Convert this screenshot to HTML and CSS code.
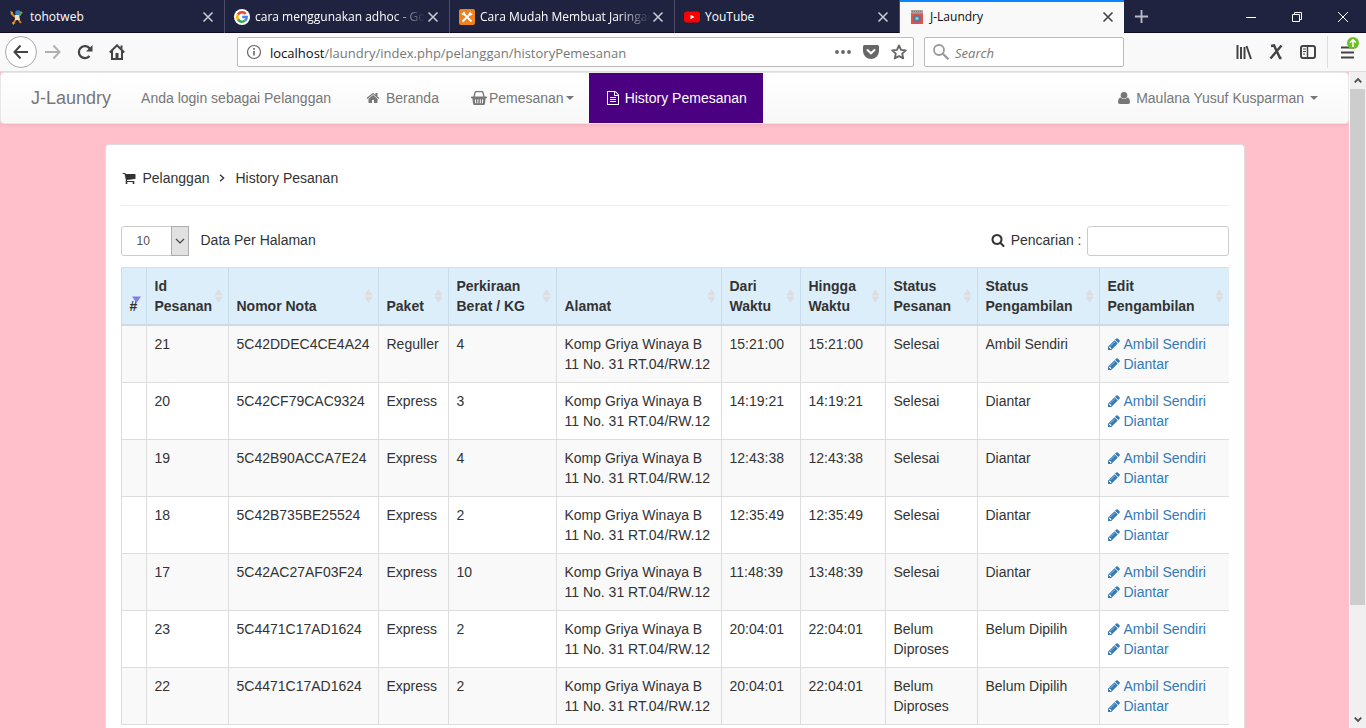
FILE: index.html
```
<!DOCTYPE html>
<html lang="id">
<head>
<meta charset="utf-8">
<title>J-Laundry</title>
<link rel="stylesheet" href="styles.css">
</head>
<body>
<svg class="sprite" aria-hidden="true">
  <symbol id="close" viewBox="0 0 16 16"><path d="M3.5 3.5l9 9M12.500 3.500l-9 9" fill="none" stroke="currentColor" stroke-width="1.600"/></symbol>
  <symbol id="pencil" viewBox="0 0 1792 1792"><path fill="currentColor" d="M491 1536l91-91-235-235-91 91v107h128v128h107zm523-928q0-22-22-22-10 0-17 7l-542 542q-7 7-7 17 0 22 22 22 10 0 17-7l542-542q7-7 7-17zm-54-192l416 416-832 832h-416v-416zm683 96q0 53-37 90l-166 166-416-416 166-165q36-38 90-38 53 0 91 38l235 234q37 39 37 91z"/></symbol>
  <symbol id="sort" viewBox="0 0 9 14"><path fill="currentColor" d="M4.500 0L8.500 6.500h-8zM4.500 14L8.500 7.500h-8z"/></symbol>
  <symbol id="caret" viewBox="0 0 8 4"><path fill="currentColor" d="M0 0h8L4 4z"/></symbol>
</svg>
<div class="browser">
  <div class="tabstrip">
    <div class="tab">
      <svg class="favicon" viewBox="0 0 16 16"><path d="M6 8l-4-4M10 7l3-4M7 10l-3 5M9 10l3 4" stroke="#d98b1f" stroke-width="1.800"/><circle cx="9" cy="4" r="2.800" fill="#2f83c4"/><path d="M6 6h4l1 5H6z" fill="#e8e3c4"/><path d="M1 2l3 1-1 3zM3 13l3 1-2 2z" fill="#e9a52c"/><path d="M11 2l2 2-2 2z" fill="#57a84f"/></svg>
      <span class="tab-title">tohotweb</span>
      <button class="tab-close" aria-label="Tutup tab"><svg viewBox="0 0 16 16"><use href="#close"/></svg></button>
    </div>
    <div class="tab">
      <svg class="favicon" viewBox="0 0 16 16"><circle cx="8" cy="8" r="8" fill="#fff"/><g fill="none" stroke-width="2.500"><path d="M11.700 5A4.700 4.700 0 0 0 4 5.500" stroke="#ea4335"/><path d="M4 5.500a4.700 4.700 0 0 0 0 5" stroke="#fbbc05"/><path d="M4 10.500a4.700 4.700 0 0 0 7 1.100" stroke="#34a853"/><path d="M11 11.600A4.700 4.700 0 0 0 12.700 8.100H8.200" stroke="#4285f4"/></g></svg>
      <span class="tab-title tab-title-fade">cara menggunakan adhoc - Go</span>
      <button class="tab-close" aria-label="Tutup tab"><svg viewBox="0 0 16 16"><use href="#close"/></svg></button>
    </div>
    <div class="tab">
      <svg class="favicon" viewBox="0 0 16 16"><rect width="16" height="16" rx="2" fill="#f0821e"/><path d="M5 5l7.500 7.500M11.500 4.500l-8 8" stroke="#fff" stroke-width="1.900"/><path d="M2.500 5l2.500-2.500 1.500 1.500L4 6.500zM10 3.500l1.500-1 .3 1.800 1.900.4-1 1.500-1.700.2z" fill="#fff"/></svg>
      <span class="tab-title tab-title-fade">Cara Mudah Membuat Jaringan</span>
      <button class="tab-close" aria-label="Tutup tab"><svg viewBox="0 0 16 16"><use href="#close"/></svg></button>
    </div>
    <div class="tab">
      <svg class="favicon" viewBox="0 0 16 16"><rect y="2.500" width="16" height="11" rx="3" fill="#f00"/><path d="M6.500 5.700v4.600l4-2.300z" fill="#fff"/></svg>
      <span class="tab-title">YouTube</span>
      <button class="tab-close" aria-label="Tutup tab"><svg viewBox="0 0 16 16"><use href="#close"/></svg></button>
    </div>
    <div class="tab tab-active">
      <svg class="favicon" viewBox="0 0 16 16"><rect x="2" y="1" width="12" height="14" fill="#e2504f"/><rect x="2" y="1" width="12" height="3.500" fill="#a9a3a0"/><path d="M3 2.500h10" stroke="#e2504f" stroke-dasharray="1 1"/><circle cx="8" cy="9.500" r="3.700" fill="#4d7f92"/><circle cx="8" cy="9.500" r="1.800" fill="#7fc4e8"/></svg>
      <span class="tab-title">J-Laundry</span>
      <button class="tab-close" aria-label="Tutup tab"><svg viewBox="0 0 16 16"><use href="#close"/></svg></button>
    </div>
    <button class="new-tab" aria-label="Tab baru"><svg viewBox="0 0 16 16"><path d="M8 1v14M1 8h14" stroke="currentColor" stroke-width="2"/></svg></button>
    <div class="window-buttons">
      <button aria-label="Minimize"><svg viewBox="0 0 12 12"><path d="M1 6.500h10" stroke="currentColor"/></svg></button>
      <button aria-label="Restore"><svg viewBox="0 0 12 12"><path d="M1.500 3.500h7v7h-7zM3.500 3.500v-2h7v7h-2" fill="none" stroke="currentColor"/></svg></button>
      <button aria-label="Close"><svg viewBox="0 0 12 12"><path d="M1 1l10 10M11 1L1 11" stroke="currentColor"/></svg></button>
    </div>
  </div>

  <div class="toolbar">
    <div class="nav-buttons">
      <button class="back" aria-label="Kembali"><svg viewBox="0 0 16 16"><path d="M15 8H1.500M7.500 1.500L1.500 8l6 6.500" fill="none" stroke="currentColor" stroke-width="2"/></svg></button>
      <button class="forward" aria-label="Maju"><svg viewBox="0 0 16 16"><path d="M0 8h14.500M8.500 1.500l6 6.500-6 6.500" fill="none" stroke="currentColor" stroke-width="2"/></svg></button>
      <button aria-label="Muat ulang"><svg viewBox="0 0 16 16"><path d="M12.500 12A6 6 0 1 1 12.700 4.500" fill="none" stroke="currentColor" stroke-width="2.200"/><path d="M15.500 1v6.500H9z" fill="currentColor"/></svg></button>
      <button aria-label="Beranda"><svg viewBox="0 0 16 16"><path d="M.8 8.500L8 1.300l7.200 7.200M3 7v8h10V7" fill="none" stroke="currentColor" stroke-width="2"/><path d="M6.500 9h3v6h-3z" fill="currentColor"/><path d="M11.500 1.500h2v4l-2-2z" fill="currentColor"/></svg></button>
    </div>
    <div class="urlbar">
      <svg class="icon-16" viewBox="0 0 16 16"><circle cx="8" cy="8" r="6.500" fill="none" stroke="currentColor" stroke-width="1.200"/><path d="M8 7v4.500M8 4v1.700" stroke="currentColor" stroke-width="1.600"/></svg>
      <a class="url" href="#"><span class="host">localhost</span>/laundry/index.php/pelanggan/historyPemesanan</a>
      <button aria-label="Tindakan"><svg viewBox="0 0 16 16"><g fill="currentColor"><circle cx="2" cy="8" r="1.900"/><circle cx="8" cy="8" r="1.900"/><circle cx="14" cy="8" r="1.900"/></g></svg></button>
      <button aria-label="Pocket"><svg viewBox="0 0 16 16"><path d="M1.500 1h13Q16 1 16 2.500V7A8 8 0 0 1 0 7V2.500Q0 1 1.500 1z" fill="currentColor"/><path d="M4.500 6L8 9.300 11.500 6" fill="none" stroke="#fff" stroke-width="2" stroke-linecap="round"/></svg></button>
      <button aria-label="Markah"><svg viewBox="0 0 16 16"><path d="M8 1.500l2 4.400 4.800.5-3.600 3.200 1 4.800L8 12l-4.200 2.400 1-4.800L1.200 6.400 6 5.900z" fill="none" stroke="currentColor" stroke-width="1.900" stroke-linejoin="round"/></svg></button>
    </div>
    <div class="searchbar">
      <svg class="icon-16" viewBox="0 0 16 16"><circle cx="6" cy="6" r="5" fill="none" stroke="currentColor" stroke-width="1.800"/><path d="M9.800 9.800l5.700 5.500" stroke="currentColor" stroke-width="2.200"/></svg>
      <input type="text" placeholder="Search" aria-label="Search">
    </div>
    <div class="tools">
      <button aria-label="Pustaka"><svg viewBox="0 0 16 16"><path d="M1.500 1v14M5 3v12M8.500 3v12M10.500 2l4.500 13" stroke="currentColor" stroke-width="2"/></svg></button>
      <button aria-label="Ekstensi"><svg viewBox="0 0 16 16"><path d="M3 2l3-.500 6 12.500h1.500M13.500 1.500L2.500 14.500" fill="none" stroke="currentColor" stroke-width="2.500"/></svg></button>
      <button aria-label="Bilah samping"><svg viewBox="0 0 16 16"><rect x="1" y="2" width="14" height="12" rx="2" fill="none" stroke="currentColor" stroke-width="2"/><path d="M7.500 2v12" stroke="currentColor" stroke-width="1.500"/><path d="M3 5h3M3 7.500h3M3 10h2" stroke="currentColor"/></svg></button>
    </div>
    <button class="menu" aria-label="Menu"><svg class="menu-lines" viewBox="0 0 13 13"><path d="M0 1.500h13M0 6.500h13M0 11.500h13" stroke="currentColor" stroke-width="2"/></svg><svg class="update-badge" viewBox="0 0 12 12"><circle cx="6" cy="6" r="6" fill="#6cc024"/><path d="M6 10V3M3 5.800L6 2.800l3 3" fill="none" stroke="#fff" stroke-width="1.500"/></svg></button>
  </div>

  <div class="viewport">
    <div class="page">
      <nav class="navbar">
        <a class="brand" href="#">J-Laundry</a>
        <span class="login-note">Anda login sebagai Pelanggan</span>
        <a class="nav-link" href="#"><svg class="fa" viewBox="0 0 1792 1792"><path fill="currentColor" d="M1472 992v480q0 26-19 45t-45 19h-384v-384h-256v384h-384q-26 0-45-19t-19-45v-480q0-1 .5-3t.5-3l575-474 575 474q1 2 1 6zm223-69l-62 74q-8 9-21 11h-3q-13 0-21-7l-692-577-692 577q-12 8-24 7-13-2-21-11l-62-74q-8-10-7-23.500t11-21.500l719-599q32-26 76-26t76 26l244 204v-195q0-14 9-23t23-9h192q14 0 23 9t9 23v408l219 182q10 8 11 21.500t-7 23.500z"/></svg><span>Beranda</span></a>
        <a class="nav-link nav-tight" href="#"><svg class="basket" viewBox="0 0 16 14"><path d="M3 6l1-4.500Q4.200.700 5 .700h6q.8 0 1 .8L13 6" fill="none" stroke="currentColor" stroke-width="1.300"/><path d="M.7 5.500h14.600q.7 0 .7.900t-.7.900h-.6l-.8 5.500q-.2 1.200-1.200 1.200H3.300q-1 0-1.200-1.200L1.300 7.300H.7Q0 7.300 0 6.400t.7-.9z" fill="currentColor"/><path d="M4.400 8.300l.3 4M6.900 8.300v4M9.300 8.300v4M11.700 8.300l-.3 4" stroke="#fbfbfb"/></svg><span>Pemesanan</span><svg class="caret" viewBox="0 0 8 4"><use href="#caret"/></svg></a>
        <a class="nav-link nav-active" href="#"><svg class="fa" viewBox="0 0 1792 1792"><path fill="currentColor" d="M1596 380q28 28 48 76t20 88v1152q0 40-28 68t-68 28h-1344q-40 0-68-28t-28-68v-1600q0-40 28-68t68-28h896q40 0 88 20t76 48zm-444-244v376h376q-10-29-22-41l-313-313q-12-12-41-22zm384 1528v-1024h-416q-40 0-68-28t-28-68v-416h-768v1536h1280zm-1024-864q0-14 9-23t23-9h704q14 0 23 9t9 23v64q0 14-9 23t-23 9h-704q-14 0-23-9t-9-23v-64zm736 224q14 0 23 9t9 23v64q0 14-9 23t-23 9h-704q-14 0-23-9t-9-23v-64q0-14 9-23t23-9h704zm0 256q14 0 23 9t9 23v64q0 14-9 23t-23 9h-704q-14 0-23-9t-9-23v-64q0-14 9-23t23-9h704z"/></svg><span>History Pemesanan</span></a>
        <a class="nav-link nav-user" href="#"><svg class="user-icon" viewBox="0 0 12 12"><circle cx="6" cy="3.300" r="3.300" fill="currentColor"/><path d="M2.600 5.500Q6 8.600 9.400 5.500 12 6.300 12 10.200 12 12 10.200 12H1.800Q0 12 0 10.200 0 6.300 2.600 5.500z" fill="currentColor"/></svg><span>Maulana Yusuf Kusparman</span><svg class="caret" viewBox="0 0 8 4"><use href="#caret"/></svg></a>
      </nav>

      <main class="panel">
        <div class="breadcrumb">
          <svg class="fa" viewBox="0 0 1792 1792"><path fill="currentColor" d="M704 1536q0 52-38 90t-90 38-90-38-38-90 38-90 90-38 90 38 38 90zm896 0q0 52-38 90t-90 38-90-38-38-90 38-90 90-38 90 38 38 90zm128-1088v512q0 24-16.500 42.500t-40.500 21.500l-1044 122q13 60 13 70 0 16-24 64h920q26 0 45 19t19 45-19 45-45 19h-1024q-26 0-45-19t-19-45q0-11 8-31.500t16-36 21.500-40 15.500-29.500l-177-823h-204q-26 0-45-19t-19-45 19-45 45-19h256q16 0 28.500 6.500t19.500 15.500 13 24.500 8 26 5.500 29.500 4.500 26h1201q26 0 45 19t19 45z"/></svg>
          <span>Pelanggan</span>
          <svg class="chevron" viewBox="0 0 6 8"><path d="M1 .7L4.700 4 1 7.300" fill="none" stroke="currentColor" stroke-width="1.300"/></svg>
          <span>History Pesanan</span>
        </div>
        <div class="controls">
          <div class="length">
            <div class="select-box">
              <select id="length"><option>10</option><option>25</option><option>50</option></select>
              <span class="select-arrow"><svg viewBox="0 0 10 6"><path d="M1 1l4 4 4-4" fill="none" stroke="#444" stroke-width="1.200"/></svg></span>
            </div>
            <label for="length">Data Per Halaman</label>
          </div>
          <div class="filter">
            <label for="filter"><svg class="fa" viewBox="0 0 1792 1792"><path fill="currentColor" d="M1216 832q0-185-131.500-316.500t-316.500-131.500-316.500 131.500-131.500 316.500 131.500 316.500 316.500 131.500 316.500-131.500 131.500-316.500zm512 832q0 52-38 90t-90 38q-54 0-90-38l-343-342q-179 124-399 124-143 0-273.500-55.500t-225-150-150-225-55.500-273.500 55.500-273.500 150-225 225-150 273.500-55.500 273.500 55.500 225 150 150 225 55.500 273.500q0 220-124 399l343 343q37 37 37 90z"/></svg><span>Pencarian :</span></label>
            <input id="filter" type="search">
          </div>
        </div>
        <table class="orders">
          <colgroup><col class="c-no"><col class="c-id"><col class="c-nota"><col class="c-paket"><col class="c-berat"><col class="c-alamat"><col class="c-dari"><col class="c-hingga"><col class="c-status"><col class="c-ambil"><col></colgroup>
          <thead>
            <tr>
              <th class="sorted">#<svg class="sort" viewBox="0 0 9 14"><path fill="currentColor" d="M4.500 14L9 7.500H0z"/></svg></th>
              <th>Id Pesanan<svg class="sort" viewBox="0 0 9 14"><use href="#sort"/></svg></th>
              <th>Nomor Nota<svg class="sort" viewBox="0 0 9 14"><use href="#sort"/></svg></th>
              <th>Paket<svg class="sort" viewBox="0 0 9 14"><use href="#sort"/></svg></th>
              <th>Perkiraan Berat / KG<svg class="sort" viewBox="0 0 9 14"><use href="#sort"/></svg></th>
              <th>Alamat<svg class="sort" viewBox="0 0 9 14"><use href="#sort"/></svg></th>
              <th>Dari Waktu<svg class="sort" viewBox="0 0 9 14"><use href="#sort"/></svg></th>
              <th>Hingga Waktu<svg class="sort" viewBox="0 0 9 14"><use href="#sort"/></svg></th>
              <th>Status Pesanan<svg class="sort" viewBox="0 0 9 14"><use href="#sort"/></svg></th>
              <th>Status Pengambilan<svg class="sort" viewBox="0 0 9 14"><use href="#sort"/></svg></th>
              <th>Edit Pengambilan<svg class="sort" viewBox="0 0 9 14"><use href="#sort"/></svg></th>
            </tr>
          </thead>
          <tbody>
            <tr><td></td><td>21</td><td>5C42DDEC4CE4A24</td><td>Reguller</td><td>4</td><td>Komp Griya Winaya B 11 No. 31 RT.04/RW.12</td><td>15:21:00</td><td>15:21:00</td><td>Selesai</td><td>Ambil Sendiri</td><td><a class="edit" href="#"><svg class="fa" viewBox="0 0 1792 1792"><use href="#pencil"/></svg>Ambil Sendiri</a><a class="edit" href="#"><svg class="fa" viewBox="0 0 1792 1792"><use href="#pencil"/></svg>Diantar</a></td></tr>
            <tr><td></td><td>20</td><td>5C42CF79CAC9324</td><td>Express</td><td>3</td><td>Komp Griya Winaya B 11 No. 31 RT.04/RW.12</td><td>14:19:21</td><td>14:19:21</td><td>Selesai</td><td>Diantar</td><td><a class="edit" href="#"><svg class="fa" viewBox="0 0 1792 1792"><use href="#pencil"/></svg>Ambil Sendiri</a><a class="edit" href="#"><svg class="fa" viewBox="0 0 1792 1792"><use href="#pencil"/></svg>Diantar</a></td></tr>
            <tr><td></td><td>19</td><td>5C42B90ACCA7E24</td><td>Express</td><td>4</td><td>Komp Griya Winaya B 11 No. 31 RT.04/RW.12</td><td>12:43:38</td><td>12:43:38</td><td>Selesai</td><td>Diantar</td><td><a class="edit" href="#"><svg class="fa" viewBox="0 0 1792 1792"><use href="#pencil"/></svg>Ambil Sendiri</a><a class="edit" href="#"><svg class="fa" viewBox="0 0 1792 1792"><use href="#pencil"/></svg>Diantar</a></td></tr>
            <tr><td></td><td>18</td><td>5C42B735BE25524</td><td>Express</td><td>2</td><td>Komp Griya Winaya B 11 No. 31 RT.04/RW.12</td><td>12:35:49</td><td>12:35:49</td><td>Selesai</td><td>Diantar</td><td><a class="edit" href="#"><svg class="fa" viewBox="0 0 1792 1792"><use href="#pencil"/></svg>Ambil Sendiri</a><a class="edit" href="#"><svg class="fa" viewBox="0 0 1792 1792"><use href="#pencil"/></svg>Diantar</a></td></tr>
            <tr><td></td><td>17</td><td>5C42AC27AF03F24</td><td>Express</td><td>10</td><td>Komp Griya Winaya B 11 No. 31 RT.04/RW.12</td><td>11:48:39</td><td>13:48:39</td><td>Selesai</td><td>Diantar</td><td><a class="edit" href="#"><svg class="fa" viewBox="0 0 1792 1792"><use href="#pencil"/></svg>Ambil Sendiri</a><a class="edit" href="#"><svg class="fa" viewBox="0 0 1792 1792"><use href="#pencil"/></svg>Diantar</a></td></tr>
            <tr><td></td><td>23</td><td>5C4471C17AD1624</td><td>Express</td><td>2</td><td>Komp Griya Winaya B 11 No. 31 RT.04/RW.12</td><td>20:04:01</td><td>22:04:01</td><td>Belum Diproses</td><td>Belum Dipilih</td><td><a class="edit" href="#"><svg class="fa" viewBox="0 0 1792 1792"><use href="#pencil"/></svg>Ambil Sendiri</a><a class="edit" href="#"><svg class="fa" viewBox="0 0 1792 1792"><use href="#pencil"/></svg>Diantar</a></td></tr>
            <tr><td></td><td>22</td><td>5C4471C17AD1624</td><td>Express</td><td>2</td><td>Komp Griya Winaya B 11 No. 31 RT.04/RW.12</td><td>20:04:01</td><td>22:04:01</td><td>Belum Diproses</td><td>Belum Dipilih</td><td><a class="edit" href="#"><svg class="fa" viewBox="0 0 1792 1792"><use href="#pencil"/></svg>Ambil Sendiri</a><a class="edit" href="#"><svg class="fa" viewBox="0 0 1792 1792"><use href="#pencil"/></svg>Diantar</a></td></tr>
          </tbody>
        </table>
      </main>
    </div>
    <div class="scrollbar" aria-hidden="true">
      <svg viewBox="0 0 17 17"><path d="M5 10.500L8.500 7l3.500 3.500" fill="none" stroke="#505050" stroke-width="2"/></svg>
      <div class="track"><div class="thumb"></div></div>
      <svg viewBox="0 0 17 17"><path d="M5 6.500L8.500 10 12 6.500" fill="none" stroke="#505050" stroke-width="2"/></svg>
    </div>
  </div>
</div>
</body>
</html>
```
FILE: styles.css
```
* { box-sizing: border-box; }
body { margin: 0; font: 14px/20px "Liberation Sans", Arial, sans-serif; color: #333; }
a { text-decoration: none; color: inherit; }
svg { display: block; flex: none; }
button { display: flex; align-items: center; justify-content: center; margin: 0; padding: 0; border: 0; background: none; color: inherit; font: inherit; }
.sprite { display: none; }
.browser { display: flex; flex-direction: column; height: 100vh; overflow: hidden; }

/* Tab strip */
.tabstrip { display: flex; flex: none; height: 33px; background: #202340; color: #fff; font-family: "Open Sans", "Noto Sans", sans-serif; font-size: 12px; box-shadow: inset 0 -1px #0c0c1c; }
.tab { display: flex; align-items: center; flex: 0 1 225px; min-width: 0; padding: 0 8px 0 9px; border-right: 1px solid #4b4d65; }
.tab-title { flex: 1; min-width: 0; margin-left: 5px; white-space: nowrap; }
.tab-title-fade { -webkit-mask-image: linear-gradient(to left, transparent, #000 32px); mask-image: linear-gradient(to left, transparent, #000 32px); }
.tab-active { flex-basis: 224px; background: #f9f9fa; color: #0c0c0d; border-right: 0; border-top: 2px solid #0a84ff; }
.tab-active > * { margin-bottom: 2px; }
.favicon { width: 16px; height: 16px; }
.tab-close { width: 16px; height: 16px; color: #c8c8d0; }
.tab-active .tab-close { color: #444; }
.tab-close svg { width: 16px; height: 16px; }
.new-tab { width: 34px; color: #b9bac6; }
.new-tab svg { width: 15px; height: 15px; }
.window-buttons { display: flex; margin-left: auto; }
.window-buttons button { width: 46px; }
.window-buttons svg { width: 12px; height: 12px; }

/* Navigation toolbar */
.toolbar { display: flex; flex: none; align-items: center; height: 39px; background: #f9f9fa; border-bottom: 1px solid #ddd; color: #444; font-family: "Open Sans", "Noto Sans", sans-serif; font-size: 13px; }
.nav-buttons { display: flex; flex: none; width: 237px; padding-left: 5px; }
.nav-buttons button { width: 32px; height: 32px; }
.nav-buttons svg { width: 16px; height: 16px; }
.nav-buttons .back { border: 1px solid #aaa; border-radius: 50%; background: #fff; }
.nav-buttons .forward { color: #b1b1b1; }
.urlbar, .searchbar { display: flex; align-items: center; height: 30px; background: #fff; border: 1px solid #bbb; border-radius: 2px; }
.urlbar { flex: 1; min-width: 0; gap: 12px; padding: 0 6px 0 8px; color: #666; }
.url { flex: 1; min-width: 0; margin-left: -4px; padding-top: 2px; overflow: hidden; white-space: nowrap; color: #777; }
.host { color: #0c0c0d; }
.icon-16, .urlbar button, .urlbar button svg { width: 16px; height: 16px; }
.searchbar { flex: 0 1 200px; margin-left: 10px; gap: 6px; padding: 0 8px; color: #999; }
.searchbar input { flex: 1; min-width: 0; padding: 2px 0 0; border: 0; outline: 0; background: none; font: inherit; font-style: italic; }
.searchbar input::placeholder { color: #777; }
.tools { display: flex; margin-left: 104px; }
.tools button { width: 32px; height: 32px; }
.tools svg { width: 16px; height: 16px; }
.menu { position: relative; width: 39px; height: 32px; margin-left: 3px; border-left: 1px solid #ddd; }
.menu-lines { width: 13px; height: 13px; }
.update-badge { position: absolute; top: 1px; right: 7px; width: 12px; height: 12px; }

/* Page area */
.viewport { display: flex; flex: 1; min-height: 0; }
.page { flex: 1; min-width: 0; overflow: hidden; background: #ffc0cb; }
.scrollbar { display: flex; flex: none; flex-direction: column; width: 17px; background: #f0f0f0; border-left: 1px solid #fff; }
.scrollbar > svg { width: 16px; height: 17px; }
.track { flex: 1; }
.thumb { height: 83%; margin-right: 1px; background: #cdcdcd; }

.navbar { display: flex; margin-bottom: 20px; border: 1px solid #e7e7e7; border-radius: 4px; background: linear-gradient(#fff, #f8f8f8); box-shadow: 0 1px 5px rgba(0, 0, 0, .075); color: #777; line-height: 20px; }
.brand { padding: 15px 15px 15px 30px; font-size: 18px; }
.login-note { padding: 15px 18px 15px 15px; }
.nav-link { display: flex; align-items: center; gap: 6px; padding: 15px 17px; }
.nav-tight { gap: 2px; padding: 15px; }
.nav-active { gap: 5px; background: #4b0082; color: #fff; padding: 15px 16px 15px 17px; }
.nav-user { margin-left: auto; padding: 15px 30px; }
.fa { width: 14px; height: 14px; }
.user-icon { width: 12px; height: 12px; }
.basket { width: 16px; height: 14px; }
.caret { width: 8px; height: 4px; }

.panel { max-width: 1140px; margin: 0 auto; padding: 15px 15px 80px; background: #fff; border: 1px solid #ddd; border-radius: 4px; }
.breadcrumb { display: flex; align-items: center; gap: 7px; padding: 8px 0 17px 1px; border-bottom: 1px solid #eee; }
.chevron { width: 8px; height: 8px; margin: 0 2px; }
.controls { display: flex; justify-content: space-between; padding: 20px 0 11px; }
.length, .filter, .filter label { display: flex; align-items: center; }
.length { gap: 12px; }
.length label, .filter label { padding-bottom: 2px; }
.select-box { position: relative; width: 68px; }
.select-box select { width: 100%; height: 30px; padding: 0 0 0 15px; border: 1px solid #ccc; border-radius: 3px; background: #fff; color: #555; font: 12px "Liberation Sans", Arial, sans-serif; appearance: none; }
.select-arrow { position: absolute; top: 0; right: 0; bottom: 0; display: flex; align-items: center; justify-content: center; width: 18px; border: 1px solid #adadad; background: #e1e1e1; pointer-events: none; }
.select-arrow svg { width: 10px; height: 6px; }
.filter { gap: 5px; }
.filter label { gap: 6px; }
.filter input { width: 142px; height: 30px; padding: 5px 10px; border: 1px solid #ccc; border-radius: 3px; background: #fff; font-size: 12px; }

.orders { width: 100%; table-layout: fixed; border-collapse: separate; border-spacing: 0; border-top: 1px solid #ddd; }
.c-no { width: 25px; }
.c-id { width: 82px; }
.c-nota { width: 150px; }
.c-paket { width: 70px; }
.c-berat { width: 108px; }
.c-alamat { width: 165px; }
.c-dari { width: 79px; }
.c-hingga { width: 85px; }
.c-status { width: 92px; }
.c-ambil { width: 122px; }
.orders th, .orders td { padding: 8px; border-left: 1px solid #ddd; text-align: left; }
.orders th { position: relative; padding-right: 12px; vertical-align: bottom; background: #dceefa; border-left-color: #c8dcea; border-bottom: 2px solid #c8dcea; }
.orders td { vertical-align: top; border-bottom: 1px solid #ddd; }
.orders tbody tr:nth-child(odd) { background: #f9f9f9; }
.sort { position: absolute; right: 5px; bottom: 21px; width: 9px; height: 14px; color: #ddd; }
.sorted .sort { color: #7f7fe6; }
.edit { display: flex; align-items: center; gap: 3px; margin-left: -1px; color: #337ab7; }
```
